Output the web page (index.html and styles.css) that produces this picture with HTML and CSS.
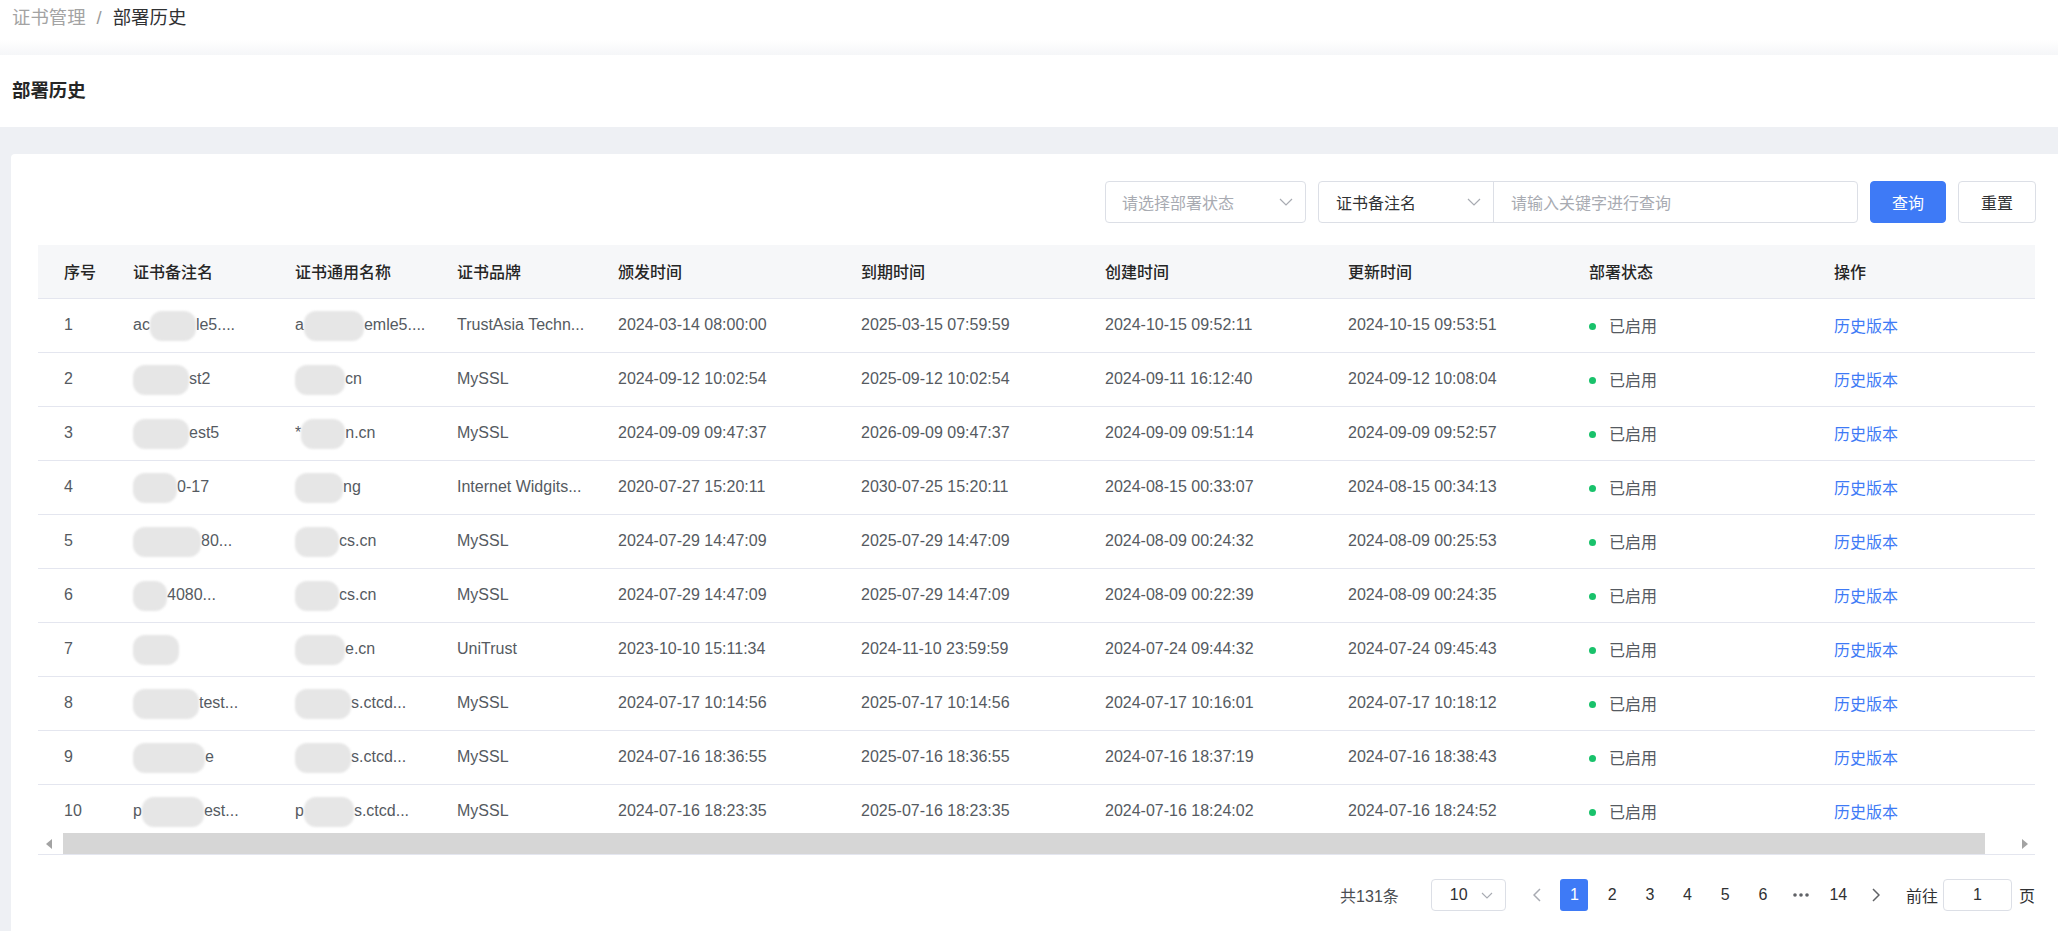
FILE: index.html
```html
<!DOCTYPE html>
<html lang="zh-CN">
<head>
<meta charset="utf-8">
<title>部署历史</title>
<link rel="stylesheet" href="styles.css">
</head>
<body>
<div class="topbar">
  <div class="crumb"><span class="crumb-parent">证书管理</span><span class="crumb-sep">/</span><span class="crumb-cur">部署历史</span></div>
</div>
<div class="pagehead">部署历史</div>
<div class="main">
  <div class="card">
    <div class="filters">
      <div class="select sel-status"><span class="ph">请选择部署状态</span><svg class="chev" viewBox="0 0 14 8" width="14" height="8"><polyline points="1,1 7,7 13,1" fill="none" stroke="#a8abb2" stroke-width="1.2"/></svg></div>
      <div class="group">
        <div class="select sel-field"><span class="val">证书备注名</span><svg class="chev" viewBox="0 0 14 8" width="14" height="8"><polyline points="1,1 7,7 13,1" fill="none" stroke="#a8abb2" stroke-width="1.2"/></svg></div>
        <div class="kw"><span class="ph">请输入关键字进行查询</span></div>
      </div>
      <button class="btn btn-primary">查询</button>
      <button class="btn btn-plain">重置</button>
    </div>

    <div class="table">
      <div class="tview">
        <table>
          <colgroup>
            <col style="width:83px"><col style="width:162px"><col style="width:162px"><col style="width:161px"><col style="width:243px"><col style="width:244px"><col style="width:243px"><col style="width:241px"><col style="width:245px"><col style="width:213px">
          </colgroup>
          <thead>
            <tr><th>序号</th><th>证书备注名</th><th>证书通用名称</th><th>证书品牌</th><th>颁发时间</th><th>到期时间</th><th>创建时间</th><th>更新时间</th><th>部署状态</th><th>操作</th></tr>
          </thead>
          <tbody>
            <tr><td>1</td><td>ac<span class="bl w46"></span>le5....</td><td>a<span class="bl w60"></span>emle5....</td><td>TrustAsia Techn...</td><td>2024-03-14 08:00:00</td><td>2025-03-15 07:59:59</td><td>2024-10-15 09:52:11</td><td>2024-10-15 09:53:51</td><td><span class="dot"></span>已启用</td><td><a class="link">历史版本</a></td></tr>
            <tr><td>2</td><td><span class="bl w56"></span>st2</td><td><span class="bl w50"></span>cn</td><td>MySSL</td><td>2024-09-12 10:02:54</td><td>2025-09-12 10:02:54</td><td>2024-09-11 16:12:40</td><td>2024-09-12 10:08:04</td><td><span class="dot"></span>已启用</td><td><a class="link">历史版本</a></td></tr>
            <tr><td>3</td><td><span class="bl w56"></span>est5</td><td>*<span class="bl w44"></span>n.cn</td><td>MySSL</td><td>2024-09-09 09:47:37</td><td>2026-09-09 09:47:37</td><td>2024-09-09 09:51:14</td><td>2024-09-09 09:52:57</td><td><span class="dot"></span>已启用</td><td><a class="link">历史版本</a></td></tr>
            <tr><td>4</td><td><span class="bl w44"></span>0-17</td><td><span class="bl w48"></span>ng</td><td>Internet Widgits...</td><td>2020-07-27 15:20:11</td><td>2030-07-25 15:20:11</td><td>2024-08-15 00:33:07</td><td>2024-08-15 00:34:13</td><td><span class="dot"></span>已启用</td><td><a class="link">历史版本</a></td></tr>
            <tr><td>5</td><td><span class="bl w68"></span>80...</td><td><span class="bl w44"></span>cs.cn</td><td>MySSL</td><td>2024-07-29 14:47:09</td><td>2025-07-29 14:47:09</td><td>2024-08-09 00:24:32</td><td>2024-08-09 00:25:53</td><td><span class="dot"></span>已启用</td><td><a class="link">历史版本</a></td></tr>
            <tr><td>6</td><td><span class="bl w34"></span>4080...</td><td><span class="bl w44"></span>cs.cn</td><td>MySSL</td><td>2024-07-29 14:47:09</td><td>2025-07-29 14:47:09</td><td>2024-08-09 00:22:39</td><td>2024-08-09 00:24:35</td><td><span class="dot"></span>已启用</td><td><a class="link">历史版本</a></td></tr>
            <tr><td>7</td><td><span class="bl w46"></span></td><td><span class="bl w50"></span>e.cn</td><td>UniTrust</td><td>2023-10-10 15:11:34</td><td>2024-11-10 23:59:59</td><td>2024-07-24 09:44:32</td><td>2024-07-24 09:45:43</td><td><span class="dot"></span>已启用</td><td><a class="link">历史版本</a></td></tr>
            <tr><td>8</td><td><span class="bl w66"></span>test...</td><td><span class="bl w56"></span>s.ctcd...</td><td>MySSL</td><td>2024-07-17 10:14:56</td><td>2025-07-17 10:14:56</td><td>2024-07-17 10:16:01</td><td>2024-07-17 10:18:12</td><td><span class="dot"></span>已启用</td><td><a class="link">历史版本</a></td></tr>
            <tr><td>9</td><td><span class="bl w72"></span>e</td><td><span class="bl w56"></span>s.ctcd...</td><td>MySSL</td><td>2024-07-16 18:36:55</td><td>2025-07-16 18:36:55</td><td>2024-07-16 18:37:19</td><td>2024-07-16 18:38:43</td><td><span class="dot"></span>已启用</td><td><a class="link">历史版本</a></td></tr>
            <tr><td>10</td><td>p<span class="bl w62"></span>est...</td><td>p<span class="bl w50"></span>s.ctcd...</td><td>MySSL</td><td>2024-07-16 18:23:35</td><td>2025-07-16 18:23:35</td><td>2024-07-16 18:24:02</td><td>2024-07-16 18:24:52</td><td><span class="dot"></span>已启用</td><td><a class="link">历史版本</a></td></tr>
          </tbody>
        </table>
      </div>
      <div class="hscroll">
        <div class="sb-btn"><svg viewBox="0 0 6 10" width="6" height="10"><polygon points="6,0 0,5 6,10" fill="#a3a3a3"/></svg></div>
        <div class="sb-track"><div class="sb-thumb"></div></div>
        <div class="sb-btn"><svg viewBox="0 0 6 10" width="6" height="10"><polygon points="0,0 6,5 0,10" fill="#a3a3a3"/></svg></div>
      </div>
    </div>

    <div class="pager">
      <span class="total">共131条</span>
      <div class="sizes"><span>10</span><svg class="chev-s" viewBox="0 0 12 7" width="12" height="7"><polyline points="1,1 6,6 11,1" fill="none" stroke="#a8abb2" stroke-width="1.1"/></svg></div>
      <span class="pbtn prev"><svg viewBox="0 0 8 14" width="8" height="14"><polyline points="7,1 1,7 7,13" fill="none" stroke="#a8abb2" stroke-width="1.5"/></svg></span>
      <span class="pbtn active">1</span>
      <span class="pbtn">2</span>
      <span class="pbtn">3</span>
      <span class="pbtn">4</span>
      <span class="pbtn">5</span>
      <span class="pbtn">6</span>
      <span class="pbtn more"><svg viewBox="0 0 16 4" width="16" height="4"><circle cx="2" cy="2" r="1.8" fill="#606266"/><circle cx="8" cy="2" r="1.8" fill="#606266"/><circle cx="14" cy="2" r="1.8" fill="#606266"/></svg></span>
      <span class="pbtn">14</span>
      <span class="pbtn next"><svg viewBox="0 0 8 14" width="8" height="14"><polyline points="1,1 7,7 1,13" fill="none" stroke="#606266" stroke-width="1.5"/></svg></span>
      <span class="goto">前往</span>
      <div class="jump">1</div>
      <span class="page-unit">页</span>
    </div>
  </div>
</div>
</body>
</html>
```
FILE: styles.css
```css
* { box-sizing: border-box; }
html, body { margin: 0; padding: 0; }
body {
  width: 2058px;
  height: 931px;
  overflow: hidden;
  background: #eef0f4;
  font-family: "Liberation Sans", "Noto Sans CJK SC", sans-serif;
  font-size: 16px;
  color: #555a61;
}

.topbar {
  height: 55px;
  padding-left: 12px;
  background: linear-gradient(to bottom, #ffffff 0, #ffffff 40px, #f5f6f8 55px);
}
.crumb {
  display: flex;
  line-height: 36px;
  font-size: 18.4px;
}
.crumb-parent { color: #a3a3a3; }
.crumb-sep { color: #9a9a9a; margin: 0 11px; }
.crumb-cur { color: #303133; }

.pagehead {
  height: 72px;
  line-height: 72px;
  padding-left: 12px;
  background: #fff;
  font-size: 18.4px;
  font-weight: 700;
  color: #262626;
}

.main { padding: 27px 0 0 11px; }
.card {
  background: #fff;
  border-radius: 4px 0 0 0;
  height: 777px;
  padding: 27px 23px 0 27px;
}

/* filters */
.filters {
  display: flex;
  justify-content: flex-end;
  gap: 12px;
  height: 42px;
  margin-right: -1px;
}
.select {
  display: flex;
  align-items: center;
  justify-content: space-between;
  height: 42px;
  padding: 0 12px 0 16px;
}
.sel-status {
  width: 201px;
  border: 1px solid #dcdfe6;
  border-radius: 4px;
}
.group {
  display: flex;
  height: 42px;
  border: 1px solid #dcdfe6;
  border-radius: 4px;
}
.group .select { height: 40px; }
.sel-field {
  width: 175px;
  padding-left: 17px;
  border-right: 1px solid #dcdfe6;
}
.kw {
  width: 363px;
  display: flex;
  align-items: center;
  padding-left: 17px;
}
.ph { color: #a8abb2; }
.val { color: #303133; }
.chev { display: block; }

.btn {
  height: 42px;
  border-radius: 4px;
  font-family: inherit;
  font-size: 16px;
  padding: 0;
  cursor: pointer;
}
.btn-primary {
  width: 76px;
  background: #3e7af6;
  border: 1px solid #3e7af6;
  color: #fff;
}
.btn-plain {
  width: 78px;
  background: #fff;
  border: 1px solid #dcdfe6;
  color: #303133;
}

/* table */
.table {
  margin-top: 22px;
  width: 1997px;
  border-bottom: 1px solid #e4e6ef;
}
.tview {
  height: 588px;
  overflow: hidden;
}
table {
  width: 1997px;
  table-layout: fixed;
  border-collapse: collapse;
}
th, td {
  text-align: left;
  padding: 0 8px 0 12px;
  white-space: nowrap;
  overflow: hidden;
  border-bottom: 1px solid #e4e6ef;
}
th:first-child, td:first-child { padding-left: 26px; }
th {
  height: 53px;
  background: #f6f7f9;
  color: #262626;
  font-weight: 500;
}
td {
  height: 54px;
  color: #555a61;
}
.bl {
  display: inline-block;
  height: 30px;
  margin: -8px 0;
  vertical-align: middle;
  background: #e6e6e6;
  border-radius: 12px;
  filter: blur(1px);
}
.w34 { width: 34px; }
.w44 { width: 44px; }
.w46 { width: 46px; }
.w48 { width: 48px; }
.w50 { width: 50px; }
.w56 { width: 56px; }
.w60 { width: 60px; }
.w62 { width: 62px; }
.w66 { width: 66px; }
.w68 { width: 68px; }
.w72 { width: 72px; }

.dot {
  display: inline-block;
  width: 7px;
  height: 7px;
  border-radius: 50%;
  background: #19c26b;
  margin-right: 13px;
  vertical-align: 2px;
}
.link { color: #3e7af6; text-decoration: none; }

.hscroll {
  display: flex;
  height: 21px;
  background: #fff;
}
.sb-btn {
  width: 21px;
  display: flex;
  align-items: center;
  justify-content: center;
}
.sb-track {
  flex: 1;
  padding: 0 29px 0 4px;
}
.sb-thumb {
  height: 21px;
  background: #d6d6d6;
}

/* pagination */
.pager {
  display: flex;
  justify-content: flex-end;
  align-items: center;
  height: 32px;
  margin-top: 24px;
  width: 1997px;
  color: #303133;
}
.total { color: #4a4d52; margin-right: 32px; }
.sizes {
  width: 75px;
  height: 32px;
  border: 1px solid #dcdfe6;
  border-radius: 4px;
  display: flex;
  align-items: center;
  justify-content: space-between;
  padding: 0 12px 0 18px;
  margin-right: 17px;
}
.chev-s { display: block; }
.pbtn {
  width: 28px;
  height: 32px;
  margin-right: 9.7px;
  display: flex;
  align-items: center;
  justify-content: center;
  border-radius: 3px;
  color: #303133;
}
.pbtn.active { background: #3e7af6; color: #fff; }
.pbtn.next { margin-right: 16px; }
.goto { color: #303133; margin-right: 5px; }
.jump {
  width: 69px;
  height: 32px;
  border: 1px solid #dcdfe6;
  border-radius: 4px;
  display: flex;
  align-items: center;
  justify-content: center;
  margin-right: 7px;
}
.page-unit { color: #303133; }
```
